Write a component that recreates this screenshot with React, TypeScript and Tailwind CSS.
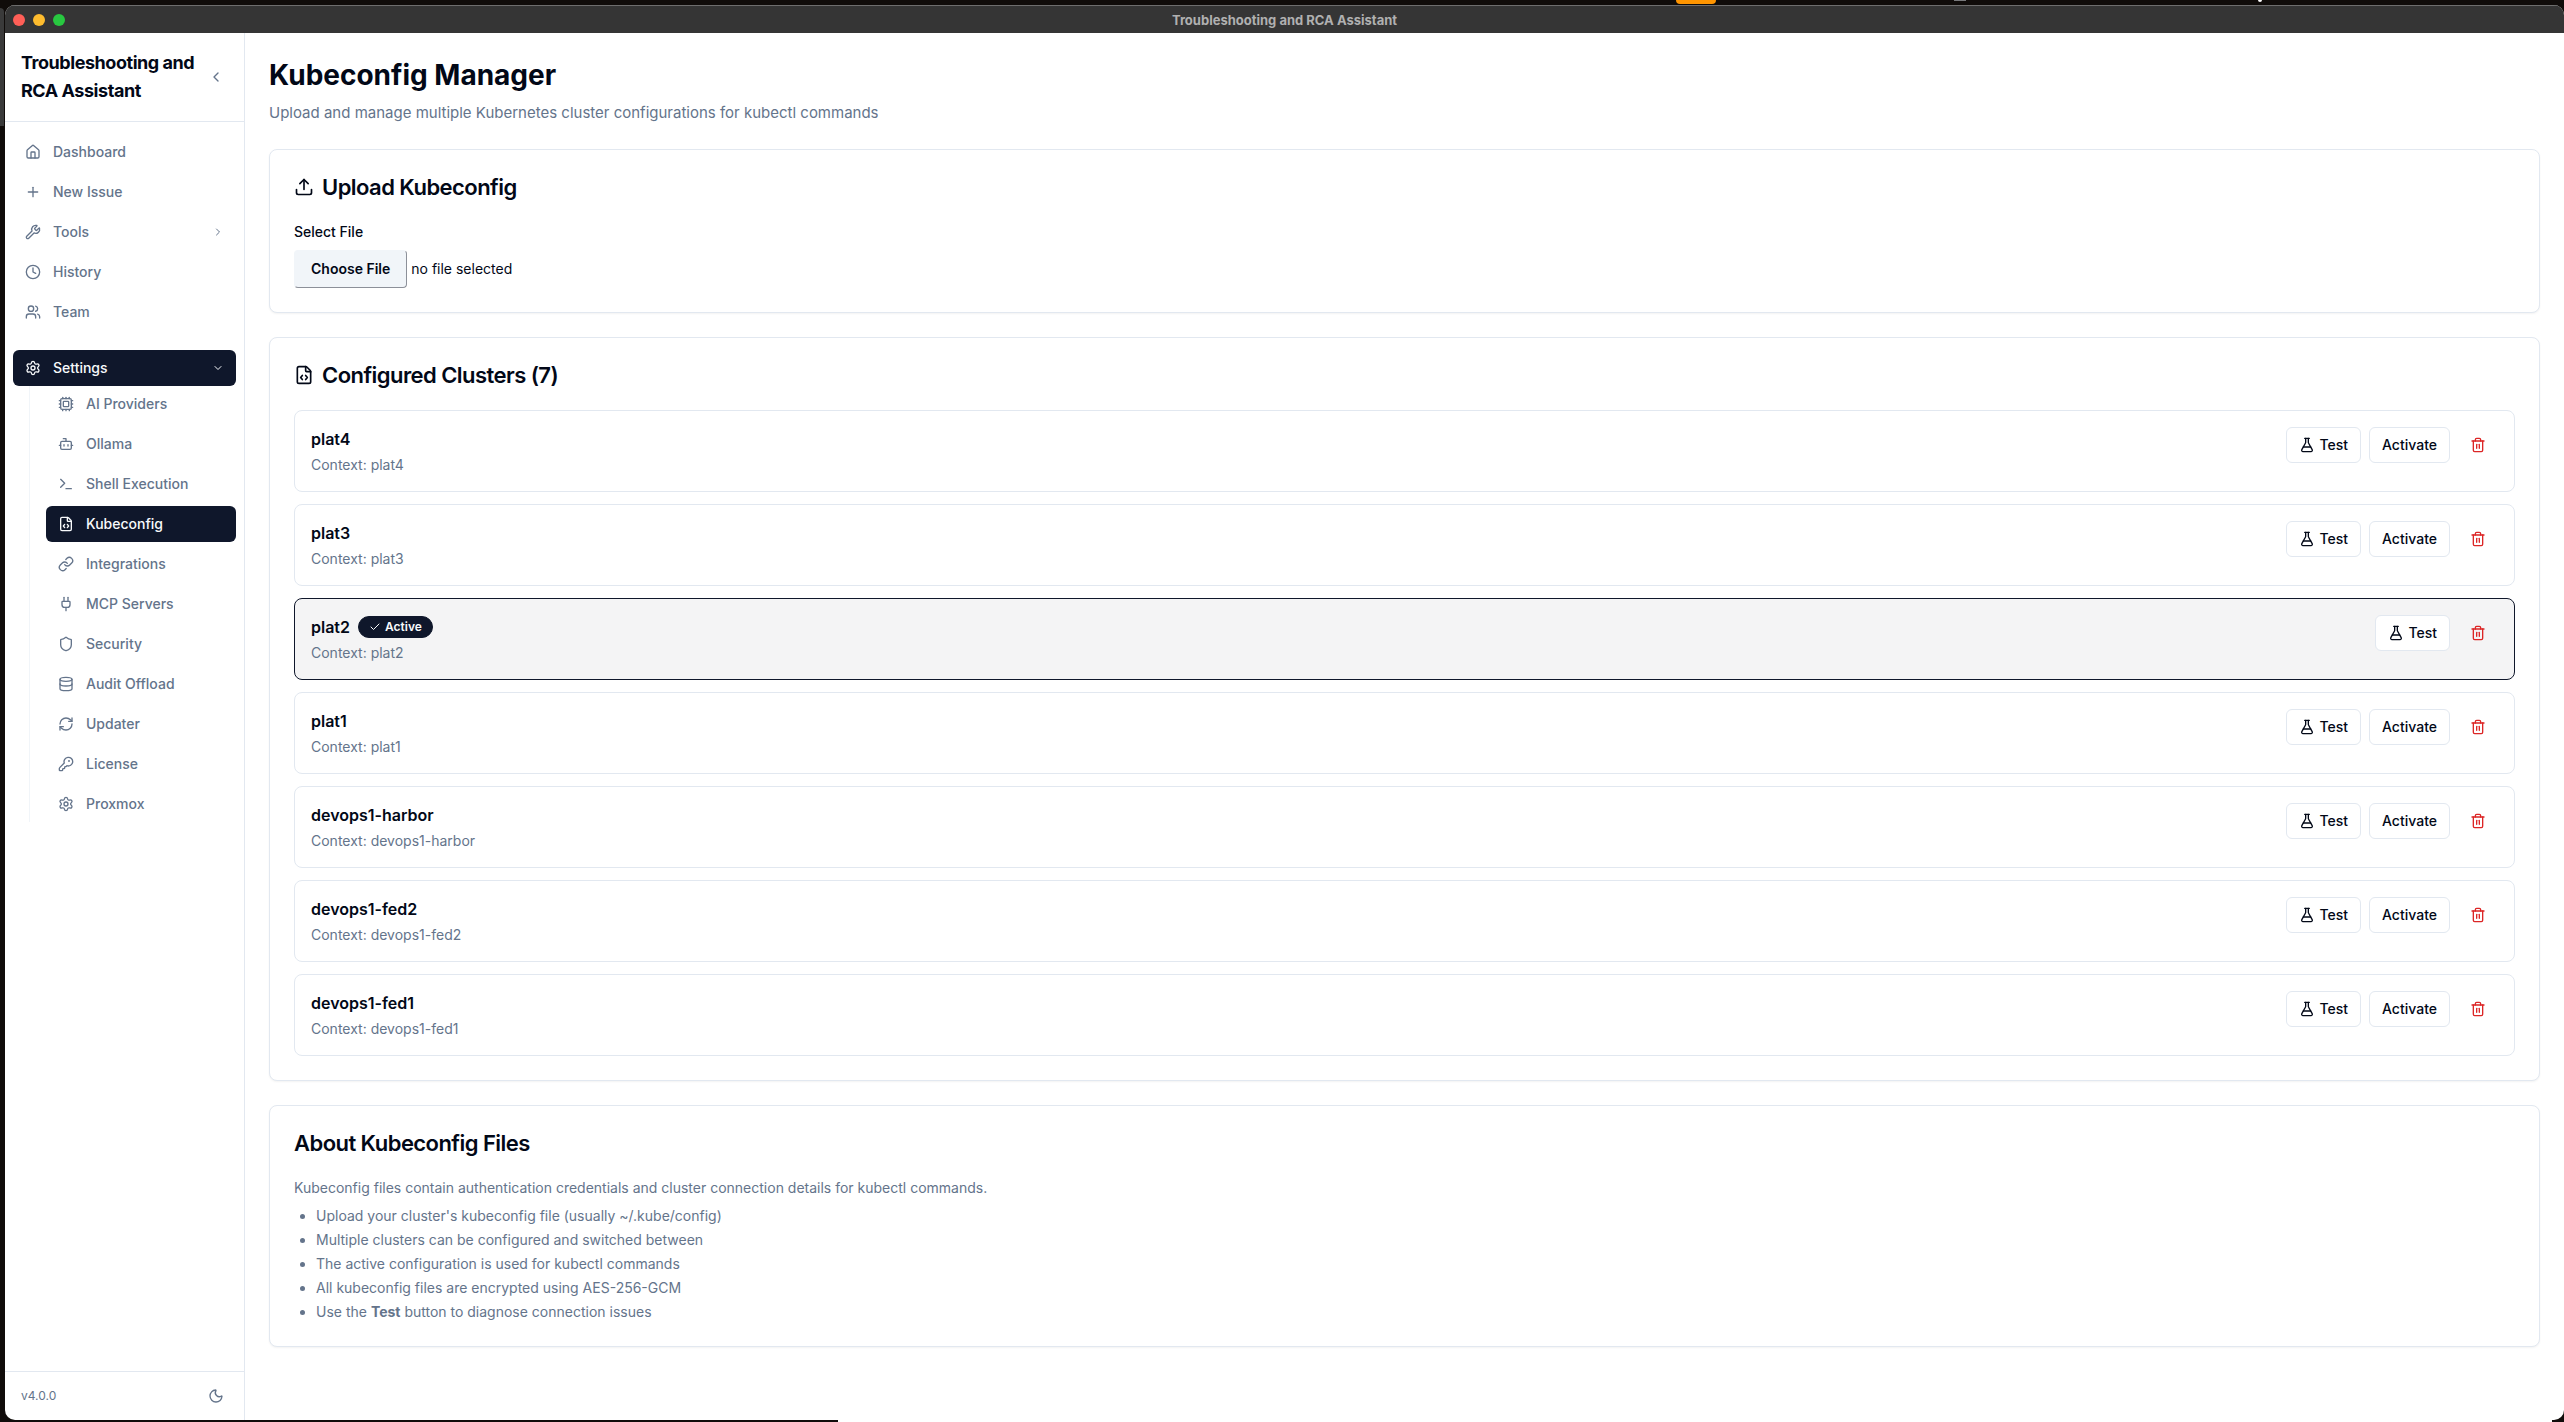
import { useRef, useState } from "react";
import {
  Bot,
  Check,
  ChevronDown,
  ChevronLeft,
  ChevronRight,
  Clock,
  Cpu,
  Database,
  FileCode,
  FlaskConical,
  House,
  KeyRound,
  Link,
  Moon,
  Plug,
  Plus,
  RefreshCw,
  Settings,
  Shield,
  Terminal,
  Trash2,
  Upload,
  Users,
  Wrench,
} from "lucide-react";
import type { LucideIcon } from "lucide-react";
import clsx from "clsx";

interface NavEntry {
  label: string;
  icon: LucideIcon;
}

interface Cluster {
  id: string;
  name: string;
  context: string;
}

const mainNav: NavEntry[] = [
  { label: "Dashboard", icon: House },
  { label: "New Issue", icon: Plus },
  { label: "Tools", icon: Wrench },
  { label: "History", icon: Clock },
  { label: "Team", icon: Users },
];

const settingsNav: NavEntry[] = [
  { label: "AI Providers", icon: Cpu },
  { label: "Ollama", icon: Bot },
  { label: "Shell Execution", icon: Terminal },
  { label: "Kubeconfig", icon: FileCode },
  { label: "Integrations", icon: Link },
  { label: "MCP Servers", icon: Plug },
  { label: "Security", icon: Shield },
  { label: "Audit Offload", icon: Database },
  { label: "Updater", icon: RefreshCw },
  { label: "License", icon: KeyRound },
  { label: "Proxmox", icon: Settings },
];

const initialClusters: Cluster[] = [
  "plat4",
  "plat3",
  "plat2",
  "plat1",
  "devops1-harbor",
  "devops1-fed2",
  "devops1-fed1",
].map((name) => ({ id: name, name, context: name }));

// Slivers of the desktop that show around the window
function DesktopEdges() {
  return (
    <div aria-hidden="true">
      <div className="absolute top-0 left-[1676px] h-1 w-10 rounded-b-sm bg-[#ff9500]"></div>
      <div className="absolute top-0 left-[1954px] h-px w-3 bg-[#77787a]"></div>
      <div className="absolute top-0 left-[2258px] h-[2px] w-1 rounded-b-sm bg-white"></div>
      <div className="absolute top-2 left-0 h-[118px] w-1 rounded-tr-md bg-[#3a3a3a]"></div>
      <div className="absolute right-3 bottom-0 left-[838px] h-[2px] bg-white"></div>
    </div>
  );
}

function TitleBar() {
  return (
    <header className="relative flex h-7 shrink-0 items-center justify-center border-t border-[#6e6e6e] bg-[#353535]">
      <div className="absolute left-2 flex gap-2">
        <span className="size-3 rounded-full bg-[#ff5f57]"></span>
        <span className="size-3 rounded-full bg-[#febc2e]"></span>
        <span className="size-3 rounded-full bg-[#28c840]"></span>
      </div>
      <span className="text-[13px] leading-4 font-bold text-[#b0b0b0]">Troubleshooting and RCA Assistant</span>
    </header>
  );
}

function NavLink({ entry, active = false }: { entry: NavEntry; active?: boolean }) {
  const Icon = entry.icon;
  return (
    <a
      href="#"
      className={clsx(
        "flex h-9 items-center gap-3 rounded-md px-3 text-sm font-medium",
        active ? "bg-slate-900 text-slate-50" : "text-[#64748b]"
      )}
    >
      <Icon className="size-4 shrink-0" />
      <span>{entry.label}</span>
      {entry.label === "Tools" && <ChevronRight className="ml-auto size-3" />}
    </a>
  );
}

function Sidebar() {
  const [settingsOpen, setSettingsOpen] = useState(true);

  return (
    <aside className="flex w-60 shrink-0 flex-col border-r border-slate-200">
      <div className="flex items-center justify-between border-b border-slate-200 p-4">
        <h2 className="text-lg font-bold tracking-tight">
          Troubleshooting and
          <br />
          RCA Assistant
        </h2>
        <button aria-label="Collapse sidebar" className="p-1 text-[#64748b]">
          <ChevronLeft className="size-4" />
        </button>
      </div>

      <nav className="flex-1 px-2 py-3">
        <div className="space-y-1">
          {mainNav.map((entry) => (
            <NavLink key={entry.label} entry={entry} />
          ))}
        </div>

        {/* Settings group */}
        <div className="mt-5">
          <button
            onClick={() => setSettingsOpen(!settingsOpen)}
            className="flex h-9 w-full items-center gap-3 rounded-md bg-slate-900 px-3 text-sm font-medium text-slate-50"
          >
            <Settings className="size-4" />
            <span>Settings</span>
            {settingsOpen ? <ChevronDown className="ml-auto size-3" /> : <ChevronRight className="ml-auto size-3" />}
          </button>
          {settingsOpen && (
            <div className="ml-4 space-y-1 border-l border-slate-100 pl-4">
              {settingsNav.map((entry) => (
                <NavLink key={entry.label} entry={entry} active={entry.label === "Kubeconfig"} />
              ))}
            </div>
          )}
        </div>
      </nav>

      <div className="flex items-center justify-between border-t border-slate-200 px-4 py-3">
        <span className="text-xs text-[#64748b]">v4.0.0</span>
        <button aria-label="Toggle theme" className="p-1 text-[#64748b]">
          <Moon className="size-4" />
        </button>
      </div>
    </aside>
  );
}

function Card({ title, icon: Icon, children }: { title: string; icon?: LucideIcon; children: React.ReactNode }) {
  return (
    <section className="rounded-lg border border-slate-200 bg-white p-6 shadow-xs">
      <h3 className="mb-[22px] flex items-center gap-2 text-[22px] leading-[26px] font-semibold tracking-tight">
        {Icon && <Icon className="size-5" />}
        {title}
      </h3>
      {children}
    </section>
  );
}

function UploadCard() {
  const inputRef = useRef<HTMLInputElement>(null);
  const [fileName, setFileName] = useState("");

  return (
    <Card title="Upload Kubeconfig" icon={Upload}>
      <label htmlFor="kubeconfig-file" className="mb-2 block text-sm font-medium">
        Select File
      </label>
      <div className="flex items-center gap-1 text-sm">
        <input
          ref={inputRef}
          id="kubeconfig-file"
          type="file"
          className="hidden"
          onChange={(e) => setFileName(e.target.files?.[0]?.name ?? "")}
        />
        <button
          onClick={() => inputRef.current?.click()}
          className="rounded-sm border border-t-slate-100 border-r-[#8c9099] border-b-[#8c9099] border-l-slate-100 bg-slate-100 px-4 py-2 font-semibold"
        >
          Choose File
        </button>
        <span>{fileName || "no file selected"}</span>
      </div>
    </Card>
  );
}

interface ClusterRowProps {
  cluster: Cluster;
  active: boolean;
  onActivate: () => void;
  onDelete: () => void;
}

function ClusterRow({ cluster, active, onActivate, onDelete }: ClusterRowProps) {
  return (
    <li
      className={clsx(
        "flex items-start justify-between rounded-lg border p-4",
        active ? "border-slate-900 bg-[#f4f4f5]" : "border-slate-200"
      )}
    >
      <div>
        <div className="flex h-6 items-center gap-2">
          <h4 className="font-semibold">{cluster.name}</h4>
          {active && (
            <span className="flex items-center gap-1 rounded-full border border-slate-900 bg-slate-900 px-2.5 py-0.5 text-xs font-semibold text-slate-50">
              <Check className="size-3" />
              Active
            </span>
          )}
        </div>
        <p className="mt-1 text-sm text-[#64748b]">Context: {cluster.context}</p>
      </div>

      <div className="flex items-center gap-2 text-sm font-medium">
        <button className="flex h-9 items-center gap-1 rounded-md border border-slate-200 bg-white px-3">
          <FlaskConical className="size-4" />
          Test
        </button>
        {!active && (
          <button onClick={onActivate} className="h-9 rounded-md border border-slate-200 bg-white px-3">
            Activate
          </button>
        )}
        <button aria-label={`Delete ${cluster.name}`} onClick={onDelete} className="h-9 rounded-md px-3 text-[#dc2626]">
          <Trash2 className="size-4" />
        </button>
      </div>
    </li>
  );
}

export default function App() {
  const [clusters, setClusters] = useState(initialClusters);
  const [activeId, setActiveId] = useState("plat2");

  const handleDelete = (id: string) => {
    setClusters((prev) => prev.filter((c) => c.id !== id));
  };

  return (
    <div className="relative flex min-h-screen flex-col overflow-hidden bg-[#100c0a] pt-[5px] pb-[2px] pl-[5px] font-[Inter,sans-serif] text-[#020817]">
      <DesktopEdges />
      <div className="flex flex-1 flex-col overflow-hidden rounded-[10px] bg-white">
        <TitleBar />
        <div className="flex flex-1">
          <Sidebar />
          <main className="min-w-0 flex-1 space-y-6 p-6">
            <div>
              <h1 className="text-[28px] leading-9 font-bold">Kubeconfig Manager</h1>
              <p className="mt-2 text-[15px] leading-6 text-[#64748b]">
                Upload and manage multiple Kubernetes cluster configurations for kubectl commands
              </p>
            </div>

            <UploadCard />

            <Card title={`Configured Clusters (${clusters.length})`} icon={FileCode}>
              <ul className="space-y-3">
                {clusters.map((cluster) => (
                  <ClusterRow
                    key={cluster.id}
                    cluster={cluster}
                    active={cluster.id === activeId}
                    onActivate={() => setActiveId(cluster.id)}
                    onDelete={() => handleDelete(cluster.id)}
                  />
                ))}
              </ul>
            </Card>

            <Card title="About Kubeconfig Files">
              <div className="space-y-2 text-sm text-[#64748b]">
                <p>Kubeconfig files contain authentication credentials and cluster connection details for kubectl commands.</p>
                <ul className="list-disc space-y-1 pl-[22px]">
                  <li>Upload your cluster's kubeconfig file (usually ~/.kube/config)</li>
                  <li>Multiple clusters can be configured and switched between</li>
                  <li>The active configuration is used for kubectl commands</li>
                  <li>All kubeconfig files are encrypted using AES-256-GCM</li>
                  <li>
                    Use the <strong>Test</strong> button to diagnose connection issues
                  </li>
                </ul>
              </div>
            </Card>
          </main>
        </div>
      </div>
    </div>
  );
}
